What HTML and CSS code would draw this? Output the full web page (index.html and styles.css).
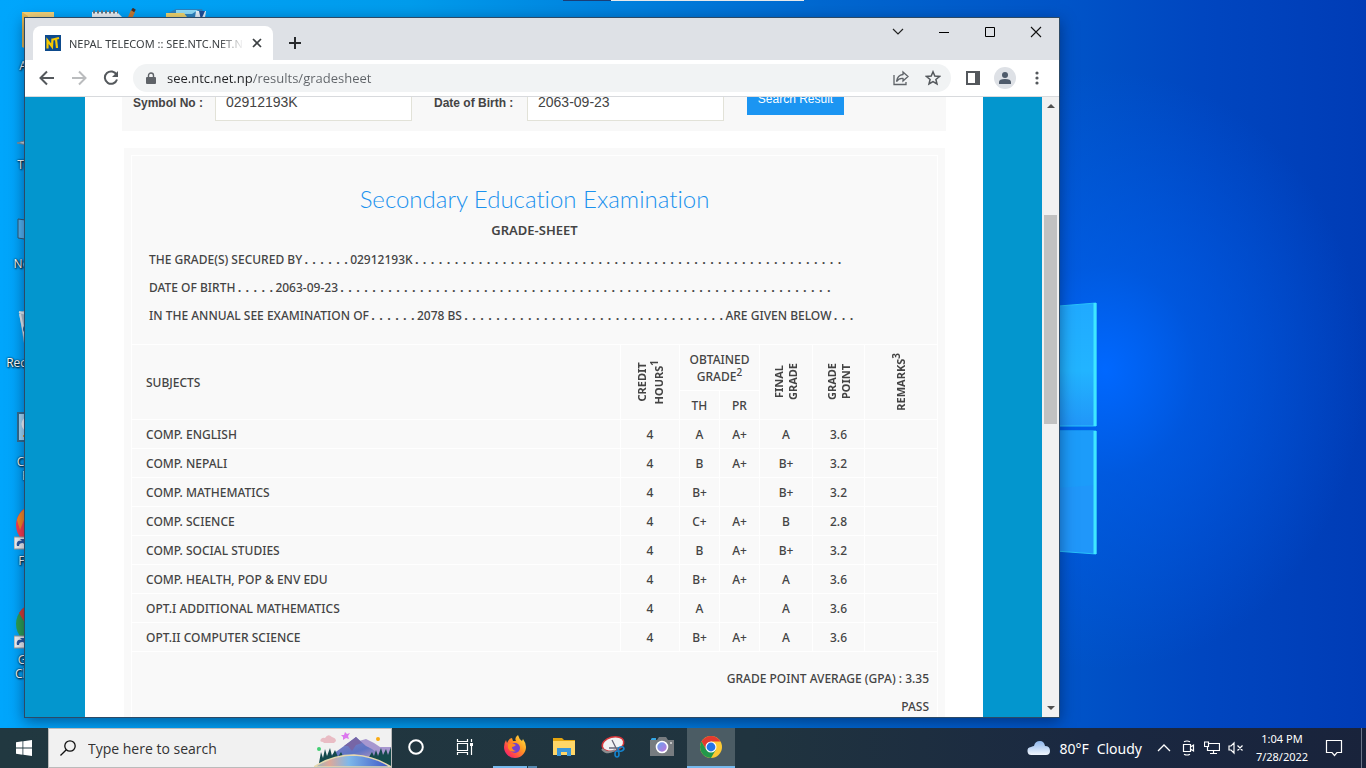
FILE: index.html
```html
<!DOCTYPE html>
<html lang="en">
  <head>
    <meta charset="UTF-8" />
    <meta name="viewport" content="width=device-width, initial-scale=1.0" />
    <title>NEPAL TELECOM :: SEE.NTC.NET.NP</title>
    <link rel="stylesheet" href="styles.css">
  </head>

  <body>
    <main class="desktop">
      <!-- Wallpaper logo -->
      <svg class="wallpaper-logo" width="140" height="270" viewBox="0 0 140 270">
        <defs>
          <linearGradient id="pane" x1="0" y1="0" x2="0" y2="1">
            <stop offset="0" stop-color="#20aaff" />
            <stop offset="0.55" stop-color="#22b4ff" />
            <stop offset="1" stop-color="#2196f8" />
          </linearGradient>
        </defs>
        <path d="M0 14 136 3V126H0Z" fill="url(#pane)" stroke="#28c2fa" stroke-width="1" />
        <path d="M0 131H136V254L0 244Z" fill="#2097fa" stroke="#28c2fa" stroke-width="1" />
        <path d="M0 131H136V185L0 196Z" fill="#1c9cfa" />
        <path d="M135 3V126M135 131V254" stroke="#3fe6ff" stroke-width="3" />
      </svg>
      <div class="docked-bar"></div>

      <!-- Desktop shortcuts -->
      <div class="shortcuts">
        <ul>
          <li class="shortcut">
            <svg width="48" height="48" viewBox="0 0 48 48"><path d="M8 4H40V44L8 39Z" fill="#f6d478" /><path d="M8 4 14 8V41L8 39Z" fill="#e6b94f" /></svg>
            <span>Admin</span>
          </li>
          <li class="shortcut">
            <svg width="48" height="48" viewBox="0 0 48 48"><path d="M3 36 24 30 45 36 24 40Z" fill="#d5d9dc" stroke="#7c8b94" /><path d="M12 6H40V28H12Z" fill="#1778c2" /></svg>
            <span>This PC</span>
          </li>
          <li class="shortcut">
            <svg width="48" height="48" viewBox="0 0 48 48"><path d="M4 13 42 18V38L4 32Z" fill="#55b5f1" stroke="#34566b" /><path d="M10 40 24 36V42Z" fill="#34708f" /></svg>
            <span>Network</span>
          </li>
          <li class="shortcut">
            <svg width="48" height="48" viewBox="0 0 48 48"><path d="M5 7 22 3 43 8 37 43 10 38Z" fill="#b9c6ce" /><path d="M5 7 24 12 43 8M6 9 12 37" fill="none" stroke="#eef3f6" stroke-width="2" /><circle cx="13" cy="24" r="4" fill="#186aa8" /></svg>
            <span>Recycle Bin</span>
          </li>
          <li class="shortcut">
            <svg width="48" height="48" viewBox="0 0 48 48"><path d="M4 9H44V37H4Z" fill="#a9dcf8" stroke="#376c8d" stroke-width="2" /><circle cx="15" cy="20" r="6" fill="none" stroke="#fff" stroke-width="3" /><path d="M9 32H24" stroke="#f09b20" stroke-width="2" /></svg>
            <span>Control Panel</span>
          </li>
          <li class="shortcut">
            <svg width="48" height="48" viewBox="0 0 48 48"><circle cx="22" cy="22" r="20" fill="#ff3c4c" /><path d="M3 17A20 20 0 0 1 22 2V13L10 17 6 27Z" fill="#ff8a1c" /><path d="M0 34H13V46H0Z" fill="#f4f4f4" stroke="#999" /><path d="M3 43C2 39 4 37 8 38L6 36H11V42L9 40C6 40 5 41 5 43Z" fill="#2c5aa0" /></svg>
            <span>Firefox</span>
          </li>
          <li class="shortcut">
            <svg width="48" height="48" viewBox="0 0 48 48"><circle cx="22" cy="22" r="20" fill="#2da04f" /><path d="M5 11A20 20 0 0 1 40 12H22L14 26Z" fill="#dd3b30" /><path d="M0 34H13V46H0Z" fill="#f4f4f4" stroke="#999" /><path d="M3 43C2 39 4 37 8 38L6 36H11V42L9 40C6 40 5 41 5 43Z" fill="#2c5aa0" /></svg>
            <span>Google Chrome</span>
          </li>
        </ul>
        <ul>
          <li class="shortcut">
            <svg width="48" height="48" viewBox="0 0 48 48"><path d="M3 4H28L33 9V40H3Z" fill="#edf1f3" /><path d="M4 4H29" stroke="#65737c" stroke-width="3" stroke-dasharray="2 2" /><path d="M42 2 46 4 40 18 37 14Z" fill="#c9792e" /><path d="M43 1 46 3" stroke="#4a2c20" stroke-width="3" /></svg>
          </li>
        </ul>
        <ul>
          <li class="shortcut">
            <svg width="48" height="48" viewBox="0 0 48 48"><path d="M4 5 12 1H38L42 10V30H2Z" fill="#2c83bf" /><path d="M12 2H34L28 6H12Z" fill="#8fdcf8" /><path d="M2 5 20 5 28 16H2Z" fill="#f3d66a" /><path d="M32 3H42L40 16H30Z" fill="#e9f3f8" /><path d="M35 3 41 3 37 12Z" fill="#1d4f98" /></svg>
          </li>
        </ul>
      </div>

      <!-- Browser window -->
      <section class="window">
        <header class="tabstrip">
          <div class="tab">
            <svg width="16" height="16" viewBox="0 0 16 16"><path d="M0 0H16V16H0Z" fill="#0d4a8c" /><path d="M2.500 13.500V5.500L7 11.500 7.500 3.500M8 4.500 14 3M11 4 12 13" fill="none" stroke="#f7c900" stroke-width="2.200" /></svg>
            <span class="tab-title">NEPAL TELECOM :: SEE.NTC.NET.NP</span>
            <button class="tab-close" aria-label="Close tab">
              <svg width="10" height="10" viewBox="0 0 10 10"><path d="M1 1 9 9M9 1 1 9" stroke="#3c4043" stroke-width="1.7" /></svg>
            </button>
          </div>
          <button class="new-tab" aria-label="New tab">
            <svg width="14" height="14" viewBox="0 0 14 14"><path d="M7 1V13M1 7H13" stroke="#27292c" stroke-width="2" /></svg>
          </button>
          <div class="window-buttons">
            <button aria-label="Search tabs"><svg width="12" height="12" viewBox="0 0 12 12"><path d="M1 3 6 8 11 3" fill="none" stroke="#222" stroke-width="1.2" /></svg></button>
            <button aria-label="Minimize"><svg width="12" height="12" viewBox="0 0 12 12"><path d="M1 6.5H11" stroke="#000" /></svg></button>
            <button aria-label="Maximize"><svg width="12" height="12" viewBox="0 0 12 12"><path d="M1.500 1.500H10.500V10.500H1.500Z" fill="none" stroke="#000" /></svg></button>
            <button aria-label="Close"><svg width="12" height="12" viewBox="0 0 12 12"><path d="M1 1 11 11M11 1 1 11" stroke="#111" stroke-width="1.100" /></svg></button>
          </div>
        </header>

        <nav class="toolbar">
          <button aria-label="Back"><svg width="16" height="16" viewBox="0 0 16 16"><path d="M15 8H2M8 1.500 1.500 8 8 14.500" fill="none" stroke="#54585c" stroke-width="2" /></svg></button>
          <button aria-label="Forward"><svg width="16" height="16" viewBox="0 0 16 16"><path d="M1 8H14M8 1.500 14.500 8 8 14.500" fill="none" stroke="#babcbe" stroke-width="2" /></svg></button>
          <button aria-label="Reload"><svg width="16" height="16" viewBox="0 0 16 16"><path d="M13.600 4.800A6.200 6.200 0 1 0 14 9.500" fill="none" stroke="#54585c" stroke-width="2" /><path d="M15 1V7H9Z" fill="#54585c" /></svg></button>
          <div class="omnibox">
            <svg width="10" height="13" viewBox="0 0 10 13"><path d="M1 5H9Q10 5 10 6V11Q10 12 9 12H1Q0 12 0 11V6Q0 5 1 5Z" fill="#5f6368" /><path d="M2.500 6V3.500A2.500 2.500 0 0 1 7.500 3.500V6" fill="none" stroke="#5f6368" stroke-width="1.400" /></svg>
            <input class="url" type="text" aria-label="Address" value="see.ntc.net.np/results/gradesheet">
            <button aria-label="Share"><svg width="16" height="16" viewBox="0 0 16 16"><path d="M1 5V14.500H13V12" fill="none" stroke="#5f6368" stroke-width="1.300" /><path d="M10 2 15 6.500 10 11V8.500Q6 8 3.500 11.500Q4.500 5 10 4.500Z" fill="none" stroke="#5f6368" stroke-width="1.300" /></svg></button>
            <button aria-label="Bookmark"><svg width="16" height="16" viewBox="0 0 16 16"><path d="M8 1.800 9.800 6.100 14.500 6.500 10.900 9.500 12 14 8 11.600 4 14 5.100 9.500 1.500 6.500 6.200 6.100Z" fill="none" stroke="#54585c" stroke-width="1.500" /></svg></button>
          </div>
          <button aria-label="Side panel"><svg width="14" height="14" viewBox="0 0 14 14"><path d="M0 0H14V14H0Z" fill="#54585c" /><path d="M2 2H9V12H2Z" fill="#fff" /></svg></button>
          <button aria-label="Profile"><svg width="22" height="22" viewBox="0 0 22 22"><circle cx="11" cy="11" r="11" fill="#dee1e6" /><circle cx="11" cy="8" r="3" fill="#4f5b6b" /><path d="M5 17V15Q5 12 11 12Q17 12 17 15V17Z" fill="#4f5b6b" /></svg></button>
          <button aria-label="Menu"><svg width="4" height="14" viewBox="0 0 4 14"><circle cx="2" cy="2" r="1.600" fill="#54585c" /><circle cx="2" cy="7" r="1.600" fill="#54585c" /><circle cx="2" cy="12" r="1.600" fill="#54585c" /></svg></button>
        </nav>

        <div class="viewport">
          <div class="page">
            <form class="search-form">
              <label for="symbol">Symbol No :</label>
              <input id="symbol" type="text" value="02912193K">
              <label class="dob-label" for="dob">Date of Birth :</label>
              <input id="dob" type="text" value="2063-09-23">
              <button type="button">Search Result</button>
            </form>

            <article class="sheet">
              <div class="sheet-inner">
                <h1>Secondary Education Examination</h1>
                <h2>GRADE-SHEET</h2>
                <div class="details">
                  <p><span>THE GRADE(S) SECURED BY</span><i>. . . . . .</i><span>02912193K</span><i>. . . . . . . . . . . . . . . . . . . . . . . . . . . . . . . . . . . . . . . . . . . . . . . . . . . . . .</i></p>
                  <p><span>DATE OF BIRTH</span><i>. . . . .</i><span>2063-09-23</span><i>. . . . . . . . . . . . . . . . . . . . . . . . . . . . . . . . . . . . . . . . . . . . . . . . . . . . . . . . . . . . . .</i></p>
                  <p><span>IN THE ANNUAL SEE EXAMINATION OF</span><i>. . . . . .</i><span>2078 BS</span><i>. . . . . . . . . . . . . . . . . . . . . . . . . . . . . . . . .</i><span>ARE GIVEN BELOW</span><i>. . .</i></p>
                </div>

                <table class="grades">
                  <colgroup>
                    <col>
                    <col class="col-credit">
                    <col class="col-mark">
                    <col class="col-mark">
                    <col class="col-grade">
                    <col class="col-point">
                    <col class="col-remarks">
                  </colgroup>
                  <thead>
                    <tr class="head-top">
                      <th class="subject" rowspan="2">SUBJECTS</th>
                      <th rowspan="2"><span class="vertical vertical-loose">CREDIT<br>HOURS<sup>1</sup></span></th>
                      <th colspan="2">OBTAINED<br>GRADE<sup>2</sup></th>
                      <th rowspan="2"><span class="vertical">FINAL<br>GRADE</span></th>
                      <th rowspan="2"><span class="vertical">GRADE<br>POINT</span></th>
                      <th rowspan="2"><span class="vertical">REMARKS<sup>3</sup></span></th>
                    </tr>
                    <tr>
                      <th>TH</th>
                      <th>PR</th>
                    </tr>
                  </thead>
                  <tbody>
                    <tr><td class="subject">COMP. ENGLISH</td><td>4</td><td>A</td><td>A+</td><td>A</td><td>3.6</td><td></td></tr>
                    <tr><td class="subject">COMP. NEPALI</td><td>4</td><td>B</td><td>A+</td><td>B+</td><td>3.2</td><td></td></tr>
                    <tr><td class="subject">COMP. MATHEMATICS</td><td>4</td><td>B+</td><td></td><td>B+</td><td>3.2</td><td></td></tr>
                    <tr><td class="subject">COMP. SCIENCE</td><td>4</td><td>C+</td><td>A+</td><td>B</td><td>2.8</td><td></td></tr>
                    <tr><td class="subject">COMP. SOCIAL STUDIES</td><td>4</td><td>B</td><td>A+</td><td>B+</td><td>3.2</td><td></td></tr>
                    <tr><td class="subject">COMP. HEALTH, POP &amp; ENV EDU</td><td>4</td><td>B+</td><td>A+</td><td>A</td><td>3.6</td><td></td></tr>
                    <tr><td class="subject">OPT.I ADDITIONAL MATHEMATICS</td><td>4</td><td>A</td><td></td><td>A</td><td>3.6</td><td></td></tr>
                    <tr><td class="subject">OPT.II COMPUTER SCIENCE</td><td>4</td><td>B+</td><td>A+</td><td>A</td><td>3.6</td><td></td></tr>
                  </tbody>
                </table>

                <div class="result">
                  <p>GRADE POINT AVERAGE (GPA) : 3.35</p>
                  <p>PASS</p>
                </div>
              </div>
            </article>
          </div>

          <div class="scrollbar">
            <svg width="8" height="4" viewBox="0 0 8 4"><path d="M0 4 4 0 8 4Z" fill="#505050" /></svg>
            <div class="track"><div class="thumb"></div></div>
            <svg width="8" height="4" viewBox="0 0 8 4"><path d="M0 0 4 4 8 0Z" fill="#505050" /></svg>
          </div>
        </div>
      </section>
    </main>

    <footer class="taskbar">
      <button class="start" aria-label="Start">
        <svg width="16" height="16" viewBox="0 0 16 16"><path d="M0 2.200 6.500 1.300V7.600H0ZM7.300 1.200 16 0V7.600H7.300ZM0 8.400H6.500V14.700L0 13.800ZM7.300 8.400H16V16L7.300 14.800Z" fill="#fff" /></svg>
      </button>
      <div class="search">
        <svg class="lens" width="16" height="16" viewBox="0 0 16 16"><circle cx="10" cy="6" r="5.200" fill="none" stroke="#111" stroke-width="1.300" /><path d="M6.300 9.700 0.500 15.500" stroke="#111" stroke-width="1.300" /></svg>
        <input type="text" aria-label="Search" placeholder="Type here to search">
        <svg width="77" height="38" viewBox="0 0 77 38">
          <defs>
            <linearGradient id="lake" x1="0" y1="0" x2="1" y2="0">
              <stop offset="0" stop-color="#8fb6c8" />
              <stop offset="0.2" stop-color="#dfa898" />
              <stop offset="0.45" stop-color="#7eb8ea" />
              <stop offset="1" stop-color="#3c52c4" />
            </linearGradient>
            <linearGradient id="hill" x1="0" y1="0" x2="1" y2="1">
              <stop offset="0" stop-color="#8f86c0" />
              <stop offset="0.6" stop-color="#5d74c4" />
              <stop offset="1" stop-color="#c49ac0" />
            </linearGradient>
          </defs>
          <path d="M45 12 52 10 60 14 66 18 77 18V34H40Z" fill="#a797cf" />
          <path d="M12 30 30 17 42 8 52 17 58 20 70 30Z" fill="url(#hill)" />
          <path d="M30 17 42 8 48 14 42 16 38 22 34 17Z" fill="#7766a6" />
          <path d="M5 34 7 23 9 29 11 20 13 27 16 19 18 27 21 21 24 28 27 23 30 29 55 28 58 23 60 27 62 21 64 27 67 19 69 26 72 20 74 26 77 18V38H5Z" fill="#154a4c" />
          <path d="M0 38Q18 26 40 26Q60 27 77 38Z" fill="url(#lake)" stroke="#e6d9b0" stroke-width="1.500" />
          <path d="M9 13Q5 13 7 10Q9 8 11 9Q14 4 18 8Q22 9 22 12L20 14H10Z" fill="#e9bcc4" />
          <path d="M31 3 33 5 36 4 34 7 35 10 32 9 29 11 29 8 27 6 30 6Z" fill="#dc78ee" />
          <circle cx="64" cy="10" r="2" fill="#f9ab13" />
          <circle cx="5" cy="20" r="2" fill="#43cf73" />
        </svg>
      </div>
      <div class="apps">
        <button aria-label="Cortana"><svg width="18" height="18" viewBox="0 0 18 18"><circle cx="9" cy="9" r="6.800" fill="none" stroke="#fff" stroke-width="2" /></svg></button>
        <button aria-label="Task view"><svg width="18" height="16" viewBox="0 0 18 16"><path d="M1.500 0V2.500H11.500V0M1.500 16V13.500H11.500V16M1.500 4.500H11.500V11.500H1.500ZM15.500 0V3M15.500 7V16" fill="none" stroke="#fff" stroke-width="1.200" /><path d="M14 4H17V7H14Z" fill="#fff" /></svg></button>
      </div>
      <div class="apps">
        <button class="running stacked" aria-label="Firefox"><svg width="24" height="24" viewBox="0 0 24 24">
          <defs><linearGradient id="fox" x1="1" y1="0" x2="0" y2="1"><stop offset="0" stop-color="#fff04a" /><stop offset="0.4" stop-color="#ff9a22" /><stop offset="0.75" stop-color="#ff3d4f" /><stop offset="1" stop-color="#e31587" /></linearGradient></defs>
          <path d="M12 23A11 11 0 0 1 1 12Q1 8 3 5L4 8Q6 3 9 3L10 6H13Q11 3 15 0Q16 4 19 6L20 4Q23 8 23 12A11 11 0 0 1 12 23Z" fill="url(#fox)" />
          <circle cx="12" cy="13" r="5" fill="#7340d0" /><path d="M5 9Q9 7 13 10Q11 12 9 12Q9 15 13 16Q7 18 5 13Z" fill="#ff8a20" /></svg></button>
        <button aria-label="File Explorer"><svg width="24" height="24" viewBox="0 0 24 24"><path d="M1 3H10L12 5H23V20H1Z" fill="#e5a50f" /><path d="M1 6H23V20H1Z" fill="#ffd667" /><path d="M5 13H19V21H15V17H9V21H5Z" fill="#3a96d9" /></svg></button>
        <button aria-label="Snipping Tool"><svg width="26" height="24" viewBox="0 0 26 24"><ellipse cx="13" cy="9" rx="11" ry="7" fill="#f1f2f3" stroke="#d7363a" stroke-width="1.500" transform="rotate(-15 13 9)" /><path d="M2 14Q7 20 15 15" fill="none" stroke="#8a8d90" stroke-width="2" /><path d="M12 5 17 15M9 13 19 13" stroke="#667" stroke-width="1.300" /><ellipse cx="21" cy="14" rx="3" ry="2" fill="none" stroke="#1583cc" stroke-width="1.600" transform="rotate(-20 21 14)" /><ellipse cx="17" cy="19" rx="2" ry="3" fill="none" stroke="#1583cc" stroke-width="1.600" /></svg></button>
        <button aria-label="Camera"><svg width="24" height="24" viewBox="0 0 24 24"><defs><linearGradient id="glass" x1="0" y1="0" x2="1" y2="1"><stop offset="0" stop-color="#5fa7f4" /><stop offset="1" stop-color="#c770d8" /></linearGradient></defs><path d="M1 4 2 3H6V6H1Z" fill="#33a6e4" /><path d="M0 5H7L9 2H16L18 5H24V21H0Z" fill="#777c80" /><circle cx="12" cy="12" r="5.500" fill="url(#glass)" stroke="#fff" stroke-width="1.600" /><circle cx="21" cy="8" r="1" fill="#ddd" /></svg></button>
        <button class="running active" aria-label="Google Chrome"><svg width="24" height="24" viewBox="0 0 24 24"><circle cx="12" cy="12" r="11" fill="#fcc934" /><path d="M2.500 6.500A11 11 0 0 1 21.500 6.500H12L7.200 14.700Z" fill="#e23a2e" /><path d="M2.500 6.500 7.200 14.700 16.800 14.700 12 23A11 11 0 0 1 2.500 6.500Z" fill="#23984b" /><circle cx="12" cy="12" r="5.500" fill="#fff" /><circle cx="12" cy="12" r="4.400" fill="#2474e6" /></svg></button>
      </div>

      <button class="weather">
        <svg width="24" height="16" viewBox="0 0 24 16"><defs><linearGradient id="cloud" x1="0" y1="0" x2="0" y2="1"><stop offset="0" stop-color="#8fb7ec" /><stop offset="1" stop-color="#f1f6fd" /></linearGradient></defs><path d="M5 15A4 4 0 0 1 4 7Q6 6 7 6Q8 1 13 1Q17 1 18 6Q23 6 23 11Q23 15 19 15Z" fill="url(#cloud)" /></svg>
        <span>80°F</span>
        <span>Cloudy</span>
      </button>
      <div class="tray">
        <button aria-label="Show hidden icons"><svg width="14" height="14" viewBox="0 0 14 14"><path d="M1 10 7 4 13 10" fill="none" stroke="#fff" stroke-width="1.300" /></svg></button>
        <button aria-label="Meet now"><svg width="14" height="16" viewBox="0 0 14 16"><path d="M2.500 4.500H9.500V11.500H2.500ZM9.500 7 12.500 5V11L9.500 9M3 1.800Q6 .2 9 1.800M3 14.200Q6 15.800 9 14.200" fill="none" stroke="#fff" stroke-width="1.200" /></svg></button>
        <button aria-label="Network"><svg width="16" height="14" viewBox="0 0 16 14"><path d="M5 2.500H15.500V9.500H3.500V6M9.500 9.500V12.500M6 12.500H13M.5 1H4.500V5.500H.5Z" fill="none" stroke="#fff" stroke-width="1.200" /></svg></button>
        <button aria-label="Volume"><svg width="16" height="14" viewBox="0 0 16 14"><path d="M1 5H3L6 2V12L3 9H1ZM9.500 4.500 14.500 9.500M14.500 4.500 9.500 9.500" fill="none" stroke="#fff" stroke-width="1.200" /></svg></button>
      </div>
      <button class="clock"><time>1:04 PM</time><time>7/28/2022</time></button>
      <button class="notify" aria-label="Notifications"><svg width="18" height="18" viewBox="0 0 18 18"><path d="M1.500 1.500H16.500V13.500H12L9.500 16.500 7 13.500H1.500Z" fill="none" stroke="#fff" stroke-width="1.200" /></svg></button>
    </footer>
  </body>
</html>
```

FILE: styles.css
```css
* {
  box-sizing: border-box;
}

body {
  display: flex;
  flex-direction: column;
  height: 100vh;
  margin: 0;
  overflow: hidden;
  font-family: "Open Sans", "Noto Sans", sans-serif;
  font-size: 12px;
  color: #444;
}

h1,
h2,
p,
ul {
  margin: 0;
  padding: 0;
}

svg {
  display: block;
  flex: none;
}

button {
  display: flex;
  align-items: center;
  justify-content: center;
  flex: none;
  padding: 0;
  border: 0;
  background: none;
  font: inherit;
  color: inherit;
}

input {
  min-width: 0;
  border: 0;
  outline: 0;
  padding: 0;
  background: none;
  font: inherit;
  color: inherit;
}

/* Desktop and wallpaper */
.desktop {
  position: relative;
  flex: 1;
  min-height: 0;
  overflow: hidden;
  background:
    radial-gradient(ellipse 260px 300px at 1105px 370px, #0068ff 0%, rgba(0, 96, 240, 0.6) 35%, rgba(0, 80, 210, 0) 100%),
    linear-gradient(90deg, #00a6fc 0%, #009cec 30%, #0068d0 60%, #0054c8 78%, #0046c0 88%, #003cb6 100%);
}

.wallpaper-logo {
  position: absolute;
  left: 960px;
  top: 300px;
}

/* Edge of a bar docked above the screen */
.docked-bar {
  position: absolute;
  top: 0;
  left: 563px;
  width: 241px;
  height: 1px;
  background: linear-gradient(90deg, #1a3f78 48px, #e8eaec 48px);
}

/* Desktop shortcuts */
.shortcuts {
  display: flex;
  padding-top: 8px;
}

.shortcuts ul {
  list-style: none;
}

.shortcut {
  display: flex;
  flex-direction: column;
  align-items: center;
  gap: 3px;
  width: 75px;
  height: 99px;
  line-height: 14px;
  text-align: center;
  color: #fff;
  text-shadow: 1px 1px 2px #000, 0 0 2px #000;
}

/* Browser window */
.window {
  position: absolute;
  inset: 17px 306px 10px 24px;
  display: flex;
  flex-direction: column;
  border: 1px solid #2c4a66;
  background: #fff;
  box-shadow: 0 4px 14px rgba(0, 20, 60, 0.5);
}

.tabstrip {
  display: flex;
  flex: none;
  height: 42px;
  padding-left: 8px;
  background: #dee1e6;
}

.tab {
  display: flex;
  align-items: center;
  gap: 8px;
  width: 240px;
  height: 34px;
  margin-top: 8px;
  padding: 0 11px 0 12px;
  border-radius: 8px 8px 0 0;
  background: #fff;
}

.tab-title {
  flex: 1;
  overflow: hidden;
  white-space: nowrap;
  font-family: "Noto Sans", sans-serif;
  font-size: 11px;
  color: #3c4043;
  -webkit-mask-image: linear-gradient(90deg, #000 86%, transparent);
  mask-image: linear-gradient(90deg, #000 86%, transparent);
}

.new-tab {
  width: 28px;
  height: 28px;
  margin: 11px 0 0 8px;
}

.window-buttons {
  display: flex;
  margin-left: auto;
}

.window-buttons button {
  width: 46px;
  height: 28px;
}

.toolbar {
  display: flex;
  align-items: center;
  flex: none;
  height: 37px;
  padding: 0 6px;
  border-bottom: 1px solid #d8dadd;
}

.toolbar button {
  width: 32px;
  height: 28px;
}

.omnibox {
  display: flex;
  align-items: center;
  flex: 1;
  height: 28px;
  margin: 0 6px;
  padding: 0 2px 0 13px;
  border-radius: 14px;
  background: #f1f3f4;
}

.url {
  flex: 1;
  margin-left: 11px;
  font-size: 13px;
  background: linear-gradient(90deg, #202124 86px, #5f6368 86px);
  -webkit-background-clip: text;
  background-clip: text;
  color: transparent;
}

.viewport {
  display: flex;
  flex: 1;
  min-height: 0;
  overflow: hidden;
  background: #0396ce;
}

.scrollbar {
  display: flex;
  flex-direction: column;
  align-items: center;
  width: 17px;
  padding: 7px 0;
  background: #f1f1f1;
}

.track {
  flex: 1;
  width: 13px;
}

.thumb {
  height: 35%;
  margin-top: 107px;
  background: #c1c1c1;
}

/* Result page */
.page {
  flex: 1;
  margin: 0 59px 0 60px;
  padding: 0 37px;
  background: #fff;
}

.search-form {
  display: flex;
  align-items: flex-start;
  height: 58px;
  margin-top: -24px;
  padding: 10px 11px;
  background: #f8f8f8;
  font-family: "Liberation Sans", Arial, sans-serif;
}

.search-form label {
  width: 82px;
  line-height: 40px;
  font-weight: bold;
}

.search-form .dob-label {
  width: 93px;
  margin-left: 22px;
}

.search-form input {
  width: 197px;
  height: 38px;
  padding: 0 10px;
  border: 1px solid #e2e2d8;
  background: #fff;
  font-size: 14px;
}

.search-form button {
  width: 97px;
  height: 32px;
  margin-left: 23px;
  background: #1b95f2;
  color: #fff;
}

.sheet {
  margin: 17px 1px 0 2px;
  padding: 7px;
  background: #f9f9f9;
}

.sheet-inner {
  padding: 27px 0 40px;
  border: 1px solid #fff;
  font-family: "Noto Sans", "Open Sans", sans-serif;
  font-weight: 500;
}

.sheet h1 {
  font-family: Lato, sans-serif;
  font-size: 24px;
  font-weight: 300;
  font-variant-ligatures: none;
  line-height: 32px;
  text-align: center;
  color: #1b92ee;
}

.sheet h2 {
  font-size: 13px;
  font-weight: 600;
  line-height: 30px;
  text-align: center;
}

.details {
  padding: 0 17px;
}

.details p {
  display: flex;
  align-items: baseline;
  gap: 2px;
  height: 28px;
  line-height: 26px;
  white-space: nowrap;
}

.details i {
  font-size: 15px;
  font-style: normal;
}

/* Grades table */
.grades {
  width: calc(100% + 2px);
  margin: 15px -1px 0;
  border-collapse: collapse;
  table-layout: fixed;
}

.grades th,
.grades td {
  height: 29px;
  padding: 0;
  border: 1px solid #fff;
  font-weight: 500;
  line-height: 17px;
  text-align: center;
}

.grades .head-top th {
  height: 46px;
}

.grades .subject {
  padding-left: 14px;
  text-align: left;
}

.grades sup {
  font-size: 10px;
  line-height: 0;
}

.col-credit {
  width: 59px;
}

.col-mark {
  width: 40px;
}

.col-grade {
  width: 53px;
}

.col-point {
  width: 52px;
}

.col-remarks {
  width: 73px;
}

.vertical {
  display: inline-block;
  writing-mode: vertical-rl;
  transform: rotate(180deg);
  line-height: 14px;
  font-size: 11px;
  font-weight: 700;
  vertical-align: middle;
}

.vertical-loose {
  line-height: 17px;
}

.result {
  padding: 13px 8px 0;
  line-height: 28px;
  text-align: right;
}

/* Taskbar */
.taskbar {
  display: flex;
  flex: none;
  height: 40px;
  background: linear-gradient(90deg, #213840 0%, #20343f 55%, #1a2841 80%, #19233b 100%);
  color: #fff;
}

.start {
  width: 48px;
}

.search {
  display: flex;
  align-items: center;
  width: 344px;
  padding-left: 11px;
  border: 1px solid #bbb;
  background: #f1f1f1;
  color: #333;
}

.search input {
  flex: 1;
  margin-left: 12px;
  font-size: 14px;
}

.search input::placeholder {
  color: #333;
}

.apps {
  display: flex;
  gap: 1px;
}

.apps + .apps {
  margin-left: 2px;
}

.apps button {
  width: 48px;
  border-bottom: 2px solid transparent;
}

.apps .running {
  border-bottom-color: #76b9ed;
}

.apps .stacked {
  border-image: linear-gradient(90deg, transparent 4px, #76b9ed 4px, #76b9ed 35px, #213840 35px, #213840 36px, #5689b0 36px, #5689b0 44px, transparent 44px) 2;
}

.apps .active {
  background: #4b5c64;
}

.weather {
  gap: 8px;
  margin-left: auto;
  font-family: "Noto Sans", sans-serif;
  font-size: 14px;
}

.tray {
  display: flex;
  margin-left: 10px;
}

.tray button {
  width: 24px;
}

.clock {
  flex-direction: column;
  width: 68px;
  font-family: "Noto Sans", sans-serif;
  font-size: 11px;
  line-height: 18px;
}

.notify {
  width: 46px;
  margin-right: 4px;
  padding-right: 9px;
  border-right: 1px solid #6c7689;
}
```
